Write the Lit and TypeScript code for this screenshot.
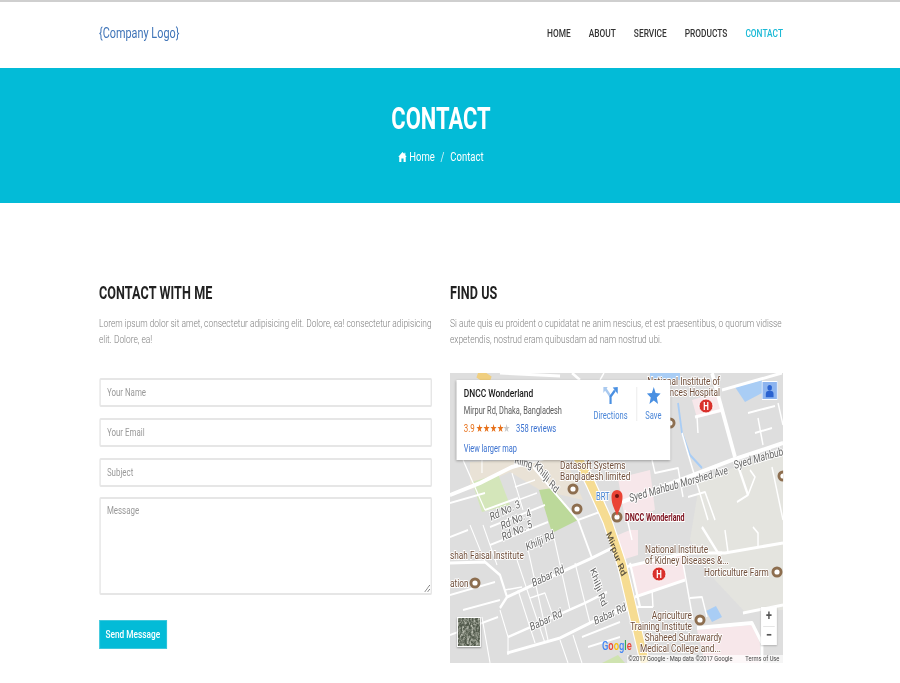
import { LitElement, html, css, svg } from "lit";
import { customElement } from "lit/decorators.js";

const S = 0.72;
type P = [number, number];
const px = (x: number) => (x - 450) / S;
const py = (y: number) => y - 373;
const pts = (a: P[]) => a.map(([x, y]) => `${px(x).toFixed(1)},${py(y)}`).join(" ");

const roads: [number, P[]][] = [
  [4, [[450, 495], [480, 483], [512, 467], [548, 457], [578, 452]]],
  [4, [[622, 502], [680, 480], [732, 460], [783, 443]]],
  [5, [[712, 373], [735, 457]]],
  [3, [[735, 457], [748, 495]]],
  [3, [[722, 390], [782, 373]]],
  [3, [[695, 417], [722, 410]]],
  [2, [[697, 417], [698, 433]]],
  [2, [[748, 413], [775, 406]]],
  [2, [[755, 433], [772, 428]]],
  [2, [[758, 418], [763, 445]]],
  [2, [[778, 403], [783, 425]]],
  [2, [[682, 433], [692, 467], [708, 520]]],
  [2, [[652, 460], [655, 473], [678, 468], [683, 497]]],
  [2, [[688, 497], [705, 492], [715, 520]]],
  [2, [[737, 502], [748, 495], [755, 477], [750, 470]]],
  [2, [[772, 467], [783, 520]]],
  [3, [[702, 527], [718, 553], [725, 553], [783, 543]]],
  [2, [[725, 530], [728, 552]]],
  [2, [[753, 527], [758, 533], [758, 547]]],
  [2, [[683, 563], [693, 620]]],
  [3, [[625, 567], [685, 553], [722, 553]]],
  [3, [[635, 597], [685, 580]]],
  [3, [[630, 563], [640, 607]]],
  [2, [[652, 590], [653, 607]]],
  [2, [[638, 607], [653, 607]]],
  [2, [[690, 598], [702, 597], [707, 617]]],
  [3, [[743, 613], [783, 605]]],
  [4, [[697, 628], [752, 623], [762, 643], [762, 663]]],
  [3, [[615, 613], [638, 607]]],
  [3, [[450, 563], [485, 562], [500, 575], [507, 597], [500, 608]]],
  [3, [[507, 597], [533, 585], [592, 558], [612, 548]]],
  [2.5, [[508, 637], [585, 603], [607, 592]]],
  [3, [[507, 653], [560, 638], [620, 608]]],
  [1.5, [[527, 545], [548, 640]]],
  [1.5, [[553, 533], [570, 610]]],
  [1.5, [[575, 563], [590, 623]]],
  [1.5, [[517, 560], [545, 643]]],
  [1.5, [[470, 525], [485, 562]]],
  [1.5, [[483, 525], [497, 565]]],
  [1.5, [[505, 590], [522, 587]]],
  [1.5, [[518, 590], [535, 643]]],
  [1.5, [[530, 598], [545, 593], [552, 613]]],
  [2, [[463, 610], [500, 600]]],
  [2, [[450, 595], [495, 582]]],
  [2, [[450, 635], [498, 617]]],
  [1.5, [[482, 617], [490, 663]]],
  [1.5, [[500, 610], [508, 637], [508, 655]]],
  [1.5, [[560, 640], [568, 663]]],
  [1.5, [[573, 635], [582, 663]]],
  [2, [[582, 637], [620, 622]]],
  [2, [[588, 647], [620, 637]]],
  [1.5, [[463, 460], [485, 510]]],
  [1.5, [[482, 460], [482, 473]]],
  [1.5, [[512, 473], [523, 510]]],
  [1.5, [[515, 487], [535, 480]]],
  [1.5, [[518, 500], [537, 493]]],
  [2, [[450, 503], [485, 493]]],
  [2, [[485, 510], [518, 498]]],
  [2, [[490, 527], [545, 505]]],
  [2, [[490, 545], [548, 522]]],
  [2.5, [[533, 467], [555, 493], [578, 520], [592, 558]]],
  [2, [[578, 520], [605, 510]]],
  [2, [[625, 510], [632, 540]]],
  [3, [[500, 373], [560, 376]]],
  [3, [[572, 373], [580, 380]]],
  [2, [[604, 373], [600, 380]]],
  [2, [[468, 530], [450, 537]]],
];

const poi = (x: number, y: number, c = "#8d6e4f", r = 5.5) => svg`
  <ellipse cx=${px(x)} cy=${py(y)} rx=${r / S} ry=${r} fill=${c}></ellipse>
  <ellipse cx=${px(x)} cy=${py(y)} rx=${2.6 / S} ry="2.6" fill="#fff"></ellipse>`;

const hosp = (x: number, y: number) => svg`
  <ellipse cx=${px(x)} cy=${py(y)} rx=${7 / S} ry="7" fill="#d9302b" stroke="#fff" stroke-width="1"></ellipse>
  <text class="h" x=${px(x)} y=${py(y) + 4} text-anchor="middle">H</text>`;

const label = (t: string, x: number, y: number, cls = "brown", rot = 0, anchor = "start") => {
  const r = rot ? (Math.atan(Math.tan((rot * Math.PI) / 180) * S) * 180) / Math.PI : 0;
  return svg`<text class=${cls} x=${px(x)} y=${py(y)} text-anchor=${anchor}
    transform=${rot ? `rotate(${r.toFixed(1)} ${px(x)} ${py(y)})` : ""}>${t}</text>`;
};

@customElement("app-root")
export class AppRoot extends LitElement {
  static styles = css`
    :host { display: block; width: 900px; height: 683px; overflow: hidden; font-family: Roboto, "Liberation Sans", sans-serif; background: #fff; }
    * { box-sizing: border-box; }
    .page { width: 1250px; transform: scaleX(0.72); transform-origin: 0 0; }
    .wrap { padding: 0 162.5px 0 137.5px; }
    header { height: 68px; border-top: 2px solid #cfcfcf; }
    header .wrap { display: flex; justify-content: space-between; align-items: center; height: 62px; }
    .logo { font-size: 15.1px; color: #3f74b8; }
    nav { display: flex; gap: 25px; font-size: 11.6px; font-weight: 500; color: #333; }
    nav .on { color: #19b9d6; }
    .hero { height: 135px; background: #03bbd7; color: #fff; text-align: center; padding-top: 33px; }
    .hero h1 { margin: 0; font-size: 30.5px; line-height: 36px; font-weight: 700; }
    .crumb { margin-top: 12px; font-size: 13.2px; line-height: 16px; display: flex; justify-content: center; align-items: center; }
    .crumb svg { width: 12px; height: 10px; margin-right: 3px; }
    .crumb i { font-style: normal; margin: 0 8px; opacity: .8; }
    .cols { display: grid; grid-template-columns: 462.5px 462.5px; gap: 25px; padding-top: 79.5px; }
    h2 { margin: 0; font-size: 17.5px; line-height: 20px; font-weight: 700; color: #222; letter-spacing: .1px; }
    p { margin: 12px 0 0; font-size: 11.68px; font-weight: 300; line-height: 16px; color: #808080; height: 32px; }
    form { display: flex; flex-direction: column; gap: 11px; margin-top: 31px; }
    input, textarea { display: block; width: 100%; border: 2px solid #e6e6e6; border-radius: 2px; outline: 0; padding: 0 9px; font: 400 11px Roboto, sans-serif; background: #fff; color: #333; }
    input { height: 29px; }
    textarea { height: 98px; padding-top: 5px; margin: -1px 0 0; }
    input::placeholder, textarea::placeholder { color: #999; opacity: 1; }
    button { align-self: flex-start; height: 29px; width: 94px; margin-top: 14px; padding: 0; border: 1px solid #3fc8dc; background: #03bbd7; color: #fff; font: 500 11.5px Roboto, sans-serif; }
    .map { position: relative; height: 290px; margin-top: 26px; overflow: hidden; }
    .map > svg { display: block; width: 100%; height: 290px; }
    .brown { font: 400 11.5px Roboto, sans-serif; fill: #6f4e3a; stroke: #fff; stroke-width: 2px; paint-order: stroke; }
    .road { font: 400 11.5px Roboto, sans-serif; fill: #666; stroke: #fff; stroke-width: 2px; paint-order: stroke; }
    .mir { font: 500 11px Roboto, sans-serif; fill: #5a5140; }
    .dn { font: 700 10px Roboto, sans-serif; fill: #7b0e1b; stroke: #fff; stroke-width: 2px; paint-order: stroke; }
    .brt { font: 400 10.5px Roboto, sans-serif; fill: #3f7fd0; stroke: #fff; stroke-width: 2px; paint-order: stroke; }
    .h { font: 700 11px Roboto, sans-serif; fill: #fff; }
    .goog { font: 500 13px Roboto, sans-serif; }
    .card { position: absolute; left: 8.5px; top: 7px; width: 297px; height: 80px; background: #fff; box-shadow: 0 1px 3px rgba(0,0,0,.3); color: #5b5b5b; padding: 7px 0 0 10.5px; }
    .card .t { font-size: 11.7px; font-weight: 500; line-height: 13px; color: #1a1a1a; }
    .card .a { font-size: 10.3px; line-height: 13px; margin-top: 4px; }
    .card .r { display: flex; align-items: center; font-size: 10.5px; line-height: 13px; margin-top: 5px; }
    .card .n { color: #e7711b; font-size: 11px; }
    .card .s { color: #e7711b; font-size: 10.5px; margin: 0 8px 0 2px; letter-spacing: -.5px; }
    .card .s b { color: #c8c8c8; font-weight: 400; }
    .card .rv { color: #3b72d0; }
    .card .v { margin-top: 7px; font-size: 10.3px; line-height: 13px; color: #3b72d0; }
    .acts { position: absolute; top: 7px; right: 0; display: flex; align-items: flex-start; color: #4a86d8; font-size: 10.5px; text-align: center; }
    .acts div { display: flex; flex-direction: column; align-items: center; gap: 5px; height: 34px; }
    .acts .d { width: 66px; border-right: 1px solid #e4e4e4; padding-right: 6px; }
    .acts .sv { width: 46px; }
    .acts svg { width: 22px; height: 17px; flex: none; display: block; }
    .zoom { position: absolute; left: 432px; top: 234px; width: 22px; height: 38px; background: #fff; display: flex; flex-direction: column; align-items: center; color: #555; font-size: 15px; font-weight: 700; line-height: 17px; text-align: center; box-shadow: 0 1px 2px rgba(0,0,0,.2); }
    .zoom span { height: 19px; width: 16px; }
    .zoom span + span { border-top: 1px solid #e6e6e6; }
    .peg { position: absolute; left: 432.5px; top: 8px; width: 22px; height: 19px; border: 1px solid #fff; background: #8db4ef; }
    .peg svg { display: block; width: 100%; height: 100%; }
    .sat { position: absolute; left: 9.5px; top: 244px; width: 33px; height: 30px; border: 1px solid #fff; box-shadow: 0 1px 2px rgba(0,0,0,.35); overflow: hidden; }
    .sat svg { display: block; width: 100%; height: 100%; }
    .foot { position: absolute; right: 0; bottom: 0; width: 217px; height: 8px; background: rgba(255,255,255,.7); color: #444; font-size: 8px; line-height: 8px; display: flex; justify-content: space-between; padding: 0 5px 0 2px; white-space: nowrap; }
  `;

  render() {
    return html`<div class="page">
      <header><div class="wrap">
        <div class="logo">{Company Logo}</div>
        <nav><span>HOME</span><span>ABOUT</span><span>SERVICE</span><span>PRODUCTS</span><span class="on">CONTACT</span></nav>
      </div></header>
      <section class="hero"><div class="wrap">
        <h1>CONTACT</h1>
        <div class="crumb">
          <svg viewBox="0 0 12 10"><path fill="#fff" d="M6 0 0 5h1.5v5h3V6.5h3V10h3V5H12L10 3.3V.8H8.6v1.3z"/></svg>
          <span>Home</span><i>/</i><span>Contact</span>
        </div>
      </div></section>
      <div class="wrap cols">
        <section>
          <h2>CONTACT WITH ME</h2>
          <p>Lorem ipsum dolor sit amet, consectetur adipisicing elit. Dolore, ea! consectetur adipisicing elit. Dolore, ea!</p>
          <form>
            <input placeholder="Your Name" />
            <input placeholder="Your Email" />
            <input placeholder="Subject" />
            <textarea placeholder="Message"></textarea>
            <button type="button">Send Message</button>
          </form>
        </section>
        <section>
          <h2>FIND US</h2>
          <p>Si aute quis eu proident o cupidatat ne anim nescius, et est praesentibus, o quorum vidisse expetendis, nostrud eram quibusdam ad nam nostrud ubi.</p>
          <div class="map">
            ${this.mapSvg()}
            <div class="peg"><svg viewBox="0 0 22 19"><ellipse cx="11" cy="6.5" rx="3.5" ry="3.2" fill="#2a62d0"/><path fill="#2a62d0" d="M5 17v-4q0-3 3-3h6q3 0 3 3v4z"/></svg></div>
            <div class="sat"><svg viewBox="0 0 33 30"><filter id="nz"><feTurbulence type="fractalNoise" baseFrequency=".3" numOctaves="3" seed="4"/><feGaussianBlur stdDeviation=".5"/><feColorMatrix values="0 0 0 0 .58  0 0 0 0 .6  0 0 0 0 .52  1.5 1.5 0 0 -1.2"/></filter><rect width="33" height="30" fill="#525a4c"/><rect width="33" height="30" filter="url(#nz)"/></svg></div>
            <div class="zoom"><span>+</span><span>−</span></div>
            <div class="foot"><span>©2017 Google - Map data ©2017 Google</span><span>Terms of Use</span></div>
            <div class="card">
              <div class="t">DNCC Wonderland</div>
              <div class="a">Mirpur Rd, Dhaka, Bangladesh</div>
              <div class="r"><span class="n">3.9</span><span class="s">★★★★<b>★</b></span><span class="rv">358 reviews</span></div>
              <div class="v">View larger map</div>
              <div class="acts">
                <div class="d"><svg viewBox="0 0 22 17"><path fill="none" stroke="#a9c9ef" stroke-width="3" d="M4 2l7 7.5"/><path fill="#a9c9ef" d="M1 0h6L1 6z"/><path fill="none" stroke="#4a90e2" stroke-width="3" d="M11 17V9.5L17 3.5"/><path fill="#4a90e2" d="M21 0v7L14 .5z"/></svg><span>Directions</span></div>
                <div class="sv"><svg viewBox="0 0 22 17"><path fill="#4a90e2" d="m11 0 2.6 6 6.9.4-5.3 4.2 1.8 6.4L11 13.5 5 17l1.8-6.4L1.5 6.4 8.4 6z"/></svg><span>Save</span></div>
              </div>
            </div>
          </div>
        </section>
      </div>
    </div>`;
  }

  mapSvg() {
    return html`<svg viewBox="0 0 462.5 290" preserveAspectRatio="none">
      <rect width="462.5" height="290" fill="#dedede"></rect>
      <polygon fill="#e4e4df" points=${pts([[700, 480], [783, 450], [783, 610], [745, 612], [715, 580], [690, 540]])}></polygon>
      <polygon fill="#e9e2d6" points=${pts([[470, 462], [565, 458], [583, 500], [540, 490], [510, 472], [470, 490]])}></polygon>
      <polygon fill="#d4e6ba" points=${pts([[472, 482], [498, 474], [510, 505], [482, 512]])}></polygon>
      <polygon fill="#bcd99a" points=${pts([[539, 490], [553, 488], [578, 520], [552, 533]])}></polygon>
      <polygon fill="#f7e7ea" points=${pts([[692, 400], [718, 392], [722, 412], [697, 418]])}></polygon>
      <polygon fill="#f7e7ea" points=${pts([[630, 530], [638, 530], [638, 555], [622, 560], [618, 535]])}></polygon>
      <polygon fill="#f7e7ea" points=${pts([[630, 565], [683, 553], [685, 580], [637, 597]])}></polygon>
      <polygon fill="#f7e7ea" points=${pts([[618, 478], [650, 470], [655, 510], [625, 520]])}></polygon>
      <polygon fill="#f7e7ea" points=${pts([[697, 630], [752, 625], [760, 643], [760, 663], [705, 663]])}></polygon>
      <polygon fill="#cfe3b0" points=${pts([[602, 663], [618, 655], [625, 663]])}></polygon>
      <polygon fill="#a9cdf5" points=${pts([[735, 387], [762, 380], [762, 393], [745, 402]])}></polygon>
      <polygon fill="#a9cdf5" points=${pts([[706, 611], [716, 606], [722, 617], [712, 622]])}></polygon>
      <polygon fill="#a9cdf5" points=${pts([[650, 373], [680, 373], [680, 380], [650, 380]])}></polygon>
      <polyline fill="none" stroke="#a9cdf5" stroke-width="2.5" points=${pts([[678, 403], [682, 433], [690, 455], [702, 468]])}></polyline>
      ${roads.map(([w, p]) => svg`<polyline fill="none" stroke="#fff" stroke-width=${w} stroke-linejoin="round" points=${pts(p)}></polyline>`)}
      <polyline fill="none" stroke="#f0cf80" stroke-width="10" points=${pts([[478, 373], [490, 381]])}></polyline>
      <polyline fill="none" stroke="#fff" stroke-width="14" points=${pts([[575, 452], [590, 482], [607, 520], [622, 565], [645, 663]])}></polyline>
      <polyline fill="none" stroke="#f6dc92" stroke-width="11" points=${pts([[575, 452], [590, 482], [607, 520], [622, 565], [645, 663]])}></polyline>
      ${label("Rd No. 3", 491, 521, "road", -25)}
      ${label("Rd No. 4", 502, 530, "road", -25)}
      ${label("Rd No. 5", 503, 541, "road", -25)}
      ${label("Khilji Rd", 527, 551, "road", -25)}
      ${label("Khilji Rd", 534, 466, "road", 52)}
      ${label("Rilng", 514, 463, "road", 18)}
      ${label("Khilji Rd", 590, 570, "road", 72)}
      ${label("Babar Rd", 533, 587, "road", -25)}
      ${label("Babar Rd", 531, 631, "road", -25)}
      ${label("Babar Rd", 595, 625, "road", -25)}
      ${label("Syed Mahbub Morshed Ave", 630, 502, "road", -16)}
      ${label("Syed Mahbub", 734.5, 469, "road", -16)}
      ${label("Mirpur Rd", 606, 534, "mir", 70)}
      ${label("Datasoft Systems", 560, 469)}
      ${label("Bangladesh limited", 560, 480)}
      ${label("National Institute of", 720, 385, "brown", 0, "end")}
      ${label("Sciences Hospital", 720, 396, "brown", 0, "end")}
      ${label("shah Faisal Institute", 450, 559)}
      ${label("ation", 450, 587)}
      ${label("National Institute", 645, 553.5)}
      ${label("of Kidney Diseases &...", 645, 564.5)}
      ${label("Horticulture Farm", 704, 576)}
      ${label("Agriculture", 692, 619.5, "brown", 0, "end")}
      ${label("Training Institute", 692, 630.5, "brown", 0, "end")}
      ${label("Shaheed Suhrawardy", 722, 641.5, "brown", 0, "end")}
      ${label("Medical College and...", 721, 652.5, "brown", 0, "end")}
      ${label("BRT", 596, 500, "brt")}
      ${label("DNCC Wonderland", 625, 521, "dn")}
      ${poi(573, 489)}${poi(577, 509)}${poi(475, 583)}${poi(777, 572)}${poi(700, 620)}${poi(670, 423)}${poi(783, 476)}
      ${hosp(706, 406)}${hosp(659, 574)}
      ${poi(617, 517)}
      <path fill="#ea4335" d="M${px(617)} ${py(516)} C${px(614)} ${py(507)} ${px(611.5)} ${py(505)} ${px(611.5)} ${py(496)} A${5.5 / S} 6 0 1 1 ${px(622.5)} ${py(496)} C${px(622.5)} ${py(505)} ${px(620)} ${py(507)} ${px(617)} ${py(516)}Z"></path>
      <ellipse cx=${px(617)} cy=${py(496)} rx=${2 / S} ry="2" fill="#6d1410"></ellipse>
      <text class="goog" x=${px(602)} y=${py(650)}><tspan fill="#4285f4">G</tspan><tspan fill="#ea4335">o</tspan><tspan fill="#fbbc05">o</tspan><tspan fill="#4285f4">g</tspan><tspan fill="#34a853">l</tspan><tspan fill="#ea4335">e</tspan></text>
    </svg>`;
  }
}
